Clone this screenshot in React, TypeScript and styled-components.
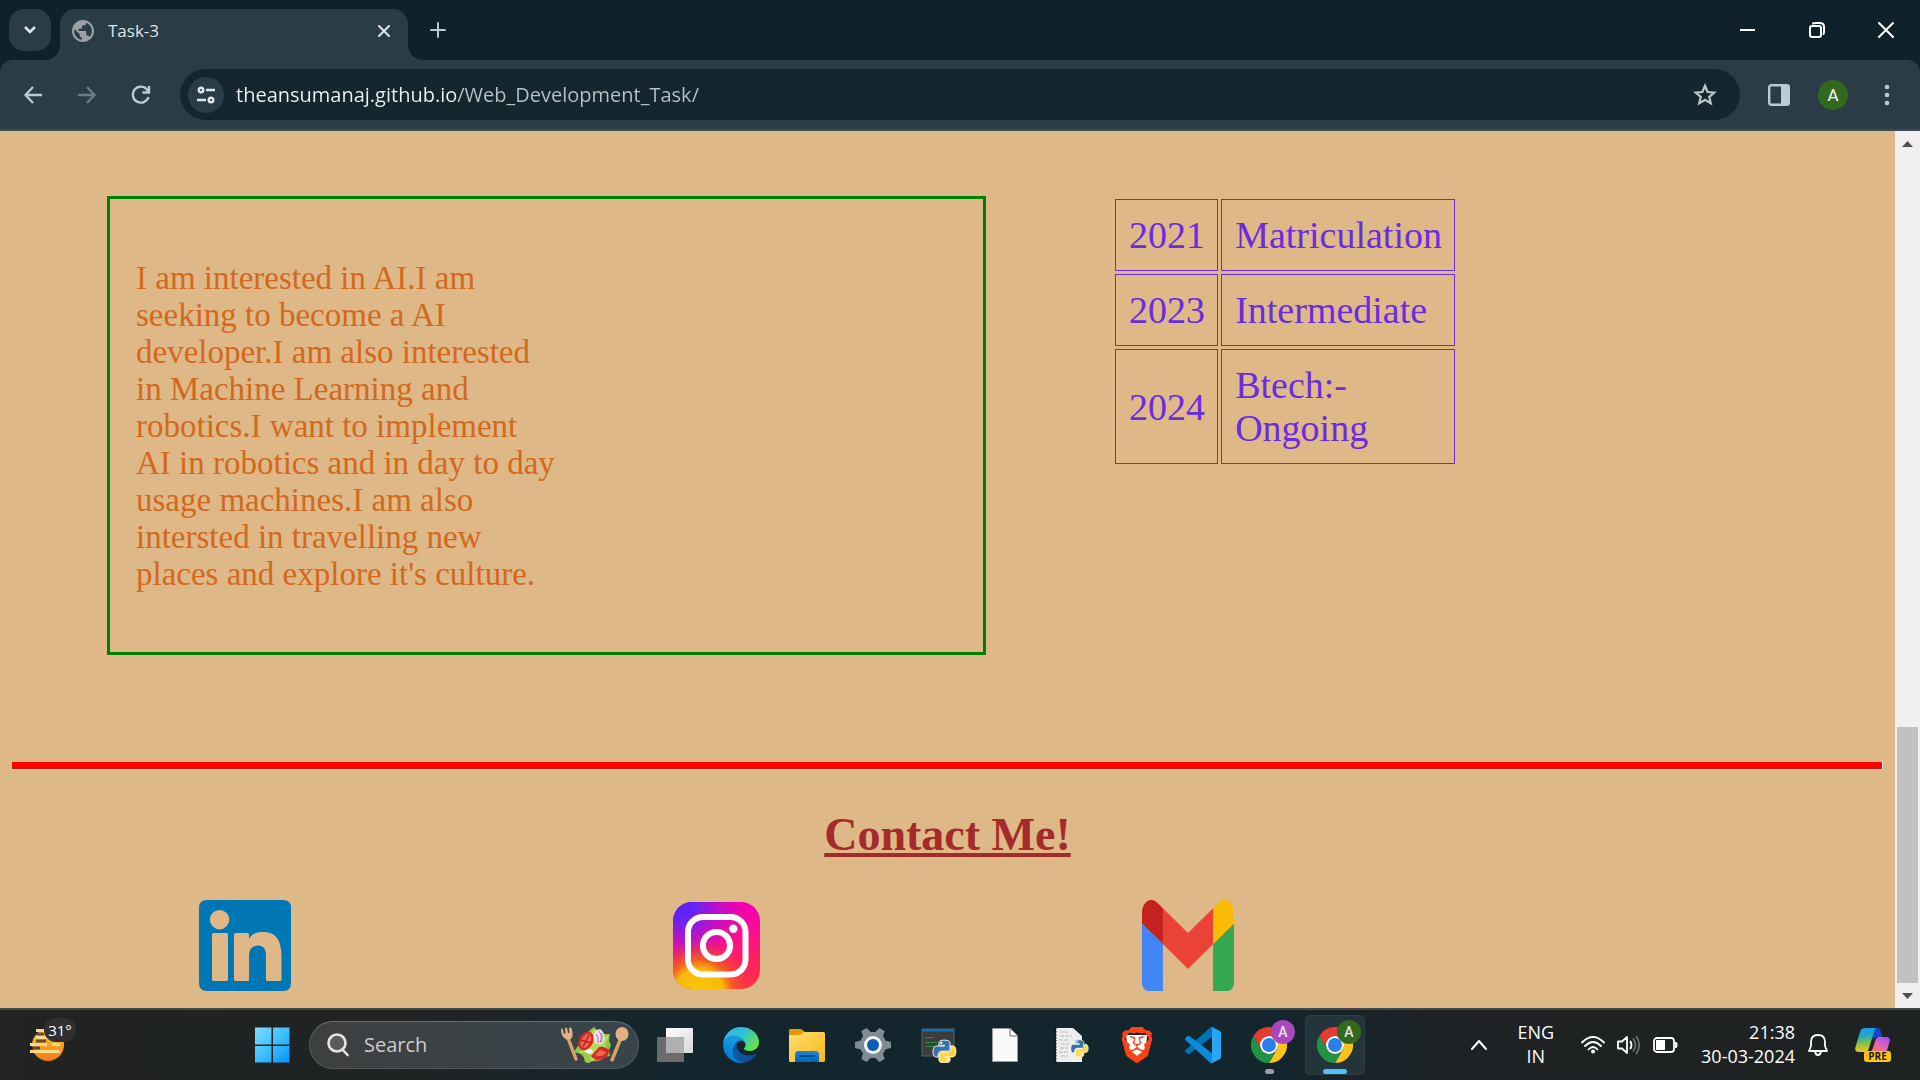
import React from "react";
import styled, { createGlobalStyle, css } from "styled-components";
import { SiBrave } from "react-icons/si";

const ui = '"Open Sans", "Noto Sans", sans-serif';
const serif = '"Liberation Serif", "Times New Roman", serif';

const GlobalStyle = createGlobalStyle`
  * { box-sizing: border-box; }
  body { margin: 0; background: #0f222b; }
`;

const Screen = styled.div`
  display: grid;
  grid-template-rows: auto minmax(0, 1fr) auto;
  height: 100vh;
  font-family: ${ui};
  overflow: hidden;
`;

/* ---------- browser chrome ---------- */

const BareButton = styled.button`
  display: flex;
  align-items: center;
  justify-content: center;
  flex: none;
  padding: 0;
  border: 0;
  background: none;
  color: inherit;
  font: inherit;
  cursor: pointer;
  svg { display: block; }
`;

const TabStrip = styled.header`
  display: flex;
  align-items: stretch;
  height: 60px;
  padding-left: 9px;
  background: #0f222b;
  color: #dfe5e8;
`;

const TabSearch = styled(BareButton)`
  width: 42px;
  height: 42px;
  margin: 9px 9px 0 0;
  border-radius: 15px;
  background: #2a3d47;
`;

const Tab = styled.div`
  position: relative;
  display: flex;
  align-items: center;
  width: 348px;
  margin-top: 9px;
  padding: 0 12px 8px;
  border-radius: 15px 15px 0 0;
  background: #2a3d47;
  &::before, &::after {
    content: "";
    position: absolute;
    bottom: 0;
    width: 15px;
    height: 15px;
  }
  &::before { right: 100%; background: radial-gradient(circle at 0 0, transparent 15px, #2a3d47 15px); }
  &::after { left: 100%; background: radial-gradient(circle at 100% 0, transparent 15px, #2a3d47 15px); }
`;

const TabTitle = styled.span`
  flex: 1;
  padding-left: 14px;
  font-size: 17px;
  line-height: 24px;
`;

const TabClose = styled(BareButton)` width: 24px; height: 24px; `;

const NewTab = styled(BareButton)`
  width: 42px;
  height: 42px;
  margin: 9px 0 0 9px;
  color: #b7cbd8;
`;

const WindowControls = styled.div`
  display: flex;
  margin-left: auto;
  color: #fff;
`;

const WindowButton = styled(BareButton)` width: 69px; `;

const Toolbar = styled.nav`
  display: flex;
  align-items: center;
  height: 71px;
  border-bottom: 2px solid #404a52;
  border-radius: 12px 12px 0 0;
  padding: 0 6px;
  background: #2a3d47;
  color: #b7cbd8;
`;

const ToolButton = styled(BareButton)<{ $dim?: boolean }>`
  width: 54px;
  height: 42px;
  opacity: ${(p) => (p.$dim ? 0.45 : 1)};
`;

const AddressBar = styled.form`
  display: flex;
  align-items: center;
  flex: 1;
  height: 51px;
  margin: 0 12px;
  padding: 0 15px 0 8px;
  border-radius: 26px;
  background: #14272f;
`;

const SiteInfo = styled(BareButton)`
  width: 36px;
  height: 36px;
  border-radius: 50%;
  background: #2a3d47;
  color: #dfe5e8;
`;

const AddressInput = styled.input`
  flex: 1;
  min-width: 0;
  padding: 0 12px;
  border: 0;
  outline: 0;
  color: #e3e8ea;
  font: 20px/30px ${ui};
  background: linear-gradient(90deg, #f4f7f8 232px, #b9c2c6 232px);
  -webkit-background-clip: text;
  background-clip: text;
  -webkit-text-fill-color: transparent;
`;

const Star = styled(BareButton)` width: 40px; height: 40px; color: #c3c8ce; `;

const Avatar = styled.span`
  display: flex;
  align-items: center;
  justify-content: center;
  width: 30px;
  height: 30px;
  border-radius: 50%;
  background: #33691e;
  color: #fff;
  font-family: Roboto, sans-serif;
  font-size: 17px;
`;

/* ---------- web page ---------- */

const Viewport = styled.div`
  display: flex;
  min-height: 0;
  background: burlywood;
`;

const Page = styled.main`
  flex: 1;
  min-width: 0;
  overflow: hidden;
  padding-top: 65px;
  font-family: ${serif};
`;

const About = styled.section`
  display: grid;
  grid-template-columns: 879fr 783fr;
  gap: 126px;
  padding-left: 107px;
`;

const Interests = styled.div`
  padding: 61px 26px 59px;
  border: 3px solid green;
  color: chocolate;
  font-size: 33px;
  line-height: 37px;
  p { max-width: 420px; margin: 0; }
`;

const Education = styled.table`
  width: 346px;
  align-self: start;
  border-collapse: separate;
  border-spacing: 3px;
  color: #6a2be2;
  font-size: 38px;
  line-height: 43px;
  th, td {
    padding: 14px 12px 13px 13px;
    border: 1px solid #6a2be2;
    font-weight: normal;
    text-align: left;
  }
  th { width: 104px; }
`;

const Divider = styled.hr`
  height: 8px;
  margin: 107px 12px 0;
  border: 0;
  border-right: 1px solid #eee;
  border-bottom: 1px solid #eee;
  background: red;
`;

const ContactTitle = styled.h2`
  margin: 38px 0;
  color: brown;
  font-size: 46px;
  line-height: 54px;
  text-align: center;
  text-decoration: underline;
`;

const Contacts = styled.section`
  display: grid;
  grid-template-columns: repeat(4, 1fr);
  padding-left: 9px;
`;

const ContactLink = styled.a`
  display: flex;
  align-items: center;
  justify-content: center;
  height: 91px;
`;

const ScrollBar = styled.aside`
  display: flex;
  flex-direction: column;
  width: 25px;
  background: #f0f0f0;
  color: #505050;
`;

const ScrollButton = styled(BareButton)` height: 25px; `;

const ScrollTrack = styled.div`
  display: flex;
  flex: 1;
  flex-direction: column;
  justify-content: flex-end;
  padding: 0 2px;
`;

const ScrollThumb = styled.div` height: 31%; background: #c1c1c1; `;

/* ---------- task bar ---------- */

const Taskbar = styled.footer`
  display: grid;
  grid-template-columns: 243px auto minmax(0, 1fr);
  height: 72px;
  border-top: 2px solid #43494a;
  background: linear-gradient(90deg, #222323 0%, #1f2324 22%, #13262e 36%, #13262e 66%, #1e2224 76%, #1f2223 100%);
  color: #fff;
`;

const Weather = styled(BareButton)`
  justify-content: flex-start;
  padding-left: 28px;
`;

const Temperature = styled.span`
  align-self: flex-start;
  width: 32px;
  margin: 8px 0 0 -20px;
  border-radius: 12px;
  background: #303030;
  font-size: 15px;
  line-height: 24px;
`;

const Apps = styled.div`
  display: flex;
  align-items: center;
  gap: 6px;
`;

const AppButton = styled(BareButton)<{ $active?: boolean; $mark?: boolean }>`
  position: relative;
  width: 60px;
  height: 60px;
  border-radius: 6px;
  ${(p) => p.$active && css`
    background: #24343b;
    box-shadow: inset 0 0 0 1px #303e44;
  `}
  ${(p) => (p.$active || p.$mark) && css`
    &::after {
      content: "";
      position: absolute;
      bottom: 1px;
      width: ${p.$active ? 24 : 9}px;
      height: 5px;
      border-radius: 3px;
      background: ${p.$active ? "#4cc2ff" : "#9aa0a3"};
    }
  `}
`;

const ProfileBadge = styled.span<{ $color: string }>`
  position: absolute;
  top: 5px;
  right: 4px;
  width: 24px;
  height: 24px;
  border-radius: 50%;
  background: ${(p) => p.$color};
  color: #e6e6e6;
  font: 500 14px/24px Roboto, sans-serif;
  text-align: center;
`;

const SearchBox = styled.label`
  display: flex;
  align-items: center;
  width: 330px;
  height: 48px;
  padding: 0 8px 0 17px;
  border: 1px solid #55595b;
  border-top-color: #6a6e70;
  border-radius: 24px;
  background: linear-gradient(90deg, #3e3f40, #37454b);
`;

const SearchInput = styled.input`
  flex: 1;
  min-width: 0;
  padding: 0 0 0 15px;
  border: 0;
  outline: 0;
  background: none;
  color: #fff;
  font: 20px/28px ${ui};
  &::placeholder { color: #cdcdcd; opacity: 1; }
`;

const Tray = styled.div`
  display: flex;
  align-items: center;
  justify-content: flex-end;
  padding-right: 29px;
  font-size: 18px;
  line-height: 24px;
`;

const TrayButton = styled(BareButton)<{ $gap: number }>`
  margin-left: ${(p) => p.$gap}px;
`;

const TwoLines = styled(TrayButton)<{ $align: string }>`
  flex-direction: column;
  align-items: ${(p) => p.$align};
  padding-bottom: 2px;
`;

/* ---------- drawings ---------- */

const stroke = { fill: "none", stroke: "currentColor", strokeLinecap: "round", strokeLinejoin: "round" } as const;

const Globe = () => (
  <svg width="22" height="22" viewBox="2 2 20 20" fill="#9aa0a6">
    <path d="M12 2C6.480 2 2 6.480 2 12s4.480 10 10 10 10-4.480 10-10S17.520 2 12 2zm-1 17.930c-3.950-.49-7-3.850-7-7.930 0-.62.080-1.210.210-1.790L9 15v1c0 1.100.9 2 2 2v1.930zm6.900-2.540c-.26-.81-1-1.390-1.900-1.390h-1v-3c0-.55-.45-1-1-1H8v-2h2c.55 0 1-.45 1-1V7h2c1.100 0 2-.9 2-2v-.41c2.930 1.190 5 4.060 5 7.410 0 2.080-.8 3.970-2.100 5.390z" />
  </svg>
);

const LinkedIn = () => (
  <svg width="92" height="91" viewBox="0 0 92 91">
    <path fill="#0077b5" fillRule="evenodd" d="M8 0H84Q92 0 92 8V83Q92 91 84 91H8Q0 91 0 83V8Q0 0 8 0ZM20.600 10a9.700 9.700 0 1 0 0 19.400a9.700 9.700 0 0 0 0-19.400ZM14.500 33Q13 33 13 34.500V79.500Q13 81 14.500 81H27.500Q29 81 29 79.500V34.500Q29 33 27.500 33ZM36.500 33Q35 33 35 34.500V79.500Q35 81 36.500 81H48.500Q50 81 50 79.500V56C50 49 53.500 45.500 59 45.500S67 49 67 56V79.500Q67 81 68.500 81H81Q82.500 81 82.500 79.500V57C82.500 40 77 32 64 32C57 32 52.500 34 50 39V34.500Q50 33 48.500 33Z" />
  </svg>
);

const Instagram = () => (
  <svg width="87" height="87" viewBox="0 0 87 87">
    <defs>
      <linearGradient id="igBase" x1="0.700" y1="0" x2="0.800" y2="1">
        <stop offset="0" stopColor="#f000b4" /><stop offset=".3" stopColor="#fb0a9a" /><stop offset=".65" stopColor="#ff1f64" /><stop offset="1" stopColor="#ff3245" />
      </linearGradient>
      <radialGradient id="igBlue" cx="0.080" cy="0.030" r=".75">
        <stop offset="0" stopColor="#5126ff" /><stop offset=".25" stopColor="#6a22f5" /><stop offset="1" stopColor="#c80acb" stopOpacity="0" />
      </radialGradient>
      <radialGradient id="igGold" cx=".3" cy="1.050" r=".62">
        <stop offset="0" stopColor="#f9c802" /><stop offset=".45" stopColor="#f8b90d" /><stop offset=".62" stopColor="#f4601f" /><stop offset="1" stopColor="#ee303f" stopOpacity="0" />
      </radialGradient>
    </defs>
    {["igBase", "igBlue", "igGold"].map((id) => <rect key={id} width="87" height="87" rx="19" fill={`url(#${id})`} />)}
    <g fill="none" stroke="#fff" strokeWidth="6">
      <rect x="15" y="15" width="57.500" height="57.500" rx="15" />
      <circle cx="43.500" cy="43.500" r="13.600" />
    </g>
    <circle cx="60.300" cy="26.800" r="4.200" fill="#fff" />
  </svg>
);

const Gmail = () => (
  <svg width="92" height="91" viewBox="52 42 88 66" preserveAspectRatio="none">
    <path fill="#4285f4" d="M58 108h14V74L52 59v43c0 3.320 2.690 6 6 6" />
    <path fill="#34a853" d="M120 108h14c3.320 0 6-2.690 6-6V59l-20 15" />
    <path fill="#fbbc04" d="M120 48v26l20-15v-8c0-7.420-8.470-11.650-14.400-7.200" />
    <path fill="#ea4335" d="M72 74V48l24 18 24-18v26L96 92" />
    <path fill="#c5221f" d="M52 51v8l20 15V48l-5.600-4.200c-5.940-4.450-14.400-.220-14.400 7.200" />
  </svg>
);

const Sun = () => (
  <svg width="36" height="36" viewBox="0 0 36 36">
    <defs><linearGradient id="sun" x1="0" y1="0" x2="0" y2="1"><stop offset="0" stopColor="#ffc83d" /><stop offset="1" stopColor="#f07a14" /></linearGradient></defs>
    <circle cx="20" cy="18" r="16" fill="url(#sun)" />
    <g stroke="#fbd98a" strokeWidth="3"><path d="M8 3.500h9M8 10.500h12M2 17.500h17M24 17.500h8M2 24.500h30" /></g>
    <path d="M8 7h8M8 14h10M4 21h8" stroke="#2a2622" strokeWidth="3" opacity=".7" />
  </svg>
);

const WindowsLogo = () => (
  <svg width="36" height="36" viewBox="0 0 36 36">
    <defs><linearGradient id="win" gradientUnits="userSpaceOnUse" x1="0" y1="0" x2="36" y2="36"><stop offset="0" stopColor="#7fdcff" /><stop offset=".5" stopColor="#3cc0fd" /><stop offset="1" stopColor="#0a8bfd" /></linearGradient></defs>
    <path fill="url(#win)" d="M0 .5h16.500v17H0zM18 .5H34.500v17H18zM0 19h16.500v16.500H0zM18 19H34.500v16.500H18z" />
  </svg>
);

const Salad = () => (
  <svg width="70" height="38" viewBox="0 0 70 38">
    <g stroke="#d99f68" strokeLinecap="round">
      <path d="M8 12 16 33" strokeWidth="3.500" /><path d="M61 12 52 34" strokeWidth="3.500" />
    </g>
    <path fill="#e5b184" d="M1 4c0-2 2-2 2 0l1 4 1.500-.5L5 3c0-2 2-2 2.300 0L8 7l1.500-.3L9 3c0-2 2.300-2 2.700 0 1 4 2 9-2 10.500C4.500 15 1 9 1 4Z" />
    <ellipse cx="62" cy="8" rx="6.500" ry="7" fill="#e5b184" />
    <circle cx="34" cy="20" r="15.500" fill="#c47a45" />
    <path fill="#8cc63e" d="M30 4 34 1l3 3 4-1 1 5 8 0-1 7 2 4-2 5 1 6-6 1-3-3-5 2-3 5-6 2-2-6-4-3-7-2 3-5 5-4 0-6 5-3Z" />
    <path fill="#b4dc5c" d="M32 5 36 3 36 14 42 12 49 9 45 19 48 27 38 27 34 35 27 34 27 27 17 27 26 22Z" />
    <ellipse cx="26" cy="15" rx="7" ry="10" transform="rotate(28 26 15)" fill="#d52b24" />
    <ellipse cx="26" cy="15" rx="4.500" ry="7.500" transform="rotate(28 26 15)" fill="#ee6850" />
    <path d="M23 21 29 9M20 14l12 3" stroke="#c4231f" strokeWidth="1.500" />
    <path fill="#d52b24" d="M31 30a10 9 0 0 0 18-6q-6-5-10-3Z" /><path fill="#ef6a52" d="M35 29q8 3 11-3l-6-2Z" />
    <ellipse cx="39" cy="11" rx="5.500" ry="7.500" fill="#efe3f0" />
    <path d="M36 8q3 3 2 9M39 5q4 5 1 12M42 7q1 4-1 9" fill="none" stroke="#ab6aa6" strokeWidth="1" />
    <path fill="#f4eef0" d="M24 25q7-5 9 1l-3 3Z" /><path fill="#9acd45" d="M23 28 31 28 30 37 25 36Z" />
  </svg>
);

const TaskView = () => (
  <svg width="36" height="36" viewBox="0 0 36 36">
    <defs><linearGradient id="tv" x2="1" y2="1"><stop stopColor="#fff" /><stop offset="1" stopColor="#d8d8d8" /></linearGradient></defs>
    <rect x="9" y="1" width="27" height="25" rx="1" fill="url(#tv)" />
    <rect x="0" y="10" width="27" height="25" rx="1" fill="#6b6b6b" />
    <path d="M9 10H27V26H9Z" fill="#b0b0b0" />
  </svg>
);

const Edge = () => (
  <svg width="36" height="36" viewBox="0 0 256 256">
    <defs>
      <linearGradient id="ed1" x1=".2" y1=".5" x2="1" y2=".5"><stop stopColor="#0c59a4" /><stop offset="1" stopColor="#114a8b" /></linearGradient>
      <linearGradient id="ed2" x1=".9" y1=".2" x2=".3" y2="1"><stop stopColor="#1b9de2" /><stop offset=".4" stopColor="#1595df" /><stop offset="1" stopColor="#0078d4" /></linearGradient>
      <linearGradient id="ed3" x1="0" y1=".2" x2="1" y2=".7"><stop stopColor="#35b5f1" /><stop offset=".45" stopColor="#2bc3d2" /><stop offset="1" stopColor="#6be23c" /></linearGradient>
    </defs>
    <path fill="url(#ed1)" d="M231 190.500c-3.400 1.800-6.900 3.400-10.500 4.700a101.500 101.500 0 0 1-35.900 6.500c-47.300 0-88.500-32.500-88.500-74.300 0-11.900 6.700-22.300 16.500-28.200-42.800 1.800-53.800 46.400-53.800 72.500 0 73.900 68.100 81.400 82.800 81.400 7.900 0 19.800-2.300 27-4.600l1.300-.4a128.300 128.300 0 0 0 66.600-52.800 4 4 0 0 0-5.500-4.800Z" />
    <path fill="url(#ed2)" d="M105.700 241.400a79.200 79.200 0 0 1-22.700-21.300 80.700 80.700 0 0 1 29.500-120.900c3.200-1.500 8.500-4.100 15.600-4 10.100.1 19.700 4.800 25.700 12.900a32.100 32.100 0 0 1 6.300 18.700c0-.2 24.500-79.600-80-79.600-43.900 0-80 41.600-80 78.200a130.200 130.200 0 0 0 12.100 56 128 128 0 0 0 156.400 67 75.600 75.600 0 0 1-62.800-7Z" />
    <path fill="url(#ed3)" d="M152.300 148.900c-.8 1-3.300 2.500-3.300 5.700 0 2.600 1.700 5.100 4.700 7.200 14.400 10 41.500 8.700 41.600 8.700a59.600 59.600 0 0 0 30.300-8.300 61.400 61.400 0 0 0 30.400-52.900c.3-22.400-8-37.300-11.300-43.900C223.500 23.900 177.700 0 128 0A128 128 0 0 0 0 126.200c.5-36.500 36.800-66 80-66 3.500 0 23.500.3 42 10.100 16.300 8.600 24.900 18.900 30.800 29.200 6.200 10.700 7.300 24.100 7.300 29.500 0 5.300-2.700 13.300-7.800 19.900Z" />
  </svg>
);

const Folder = () => (
  <svg width="36" height="36" viewBox="0 0 36 36">
    <defs>
      <linearGradient id="fo" x2="1" y2="1"><stop stopColor="#ffdd74" /><stop offset="1" stopColor="#fcb716" /></linearGradient>
      <linearGradient id="fob" x2="0" y2="1"><stop stopColor="#1d86da" /><stop offset="1" stopColor="#0466b8" /></linearGradient>
    </defs>
    <path fill="#dd9d00" d="M0 3.500Q0 2 1.500 2H11q1.500 0 2.500 1L17 6V12H0Z" />
    <path fill="url(#fo)" d="M0 8H11l4-3H34.500Q36 5 36 6.500V33.500Q36 35 34.500 35H1.500Q0 35 0 33.500Z" />
    <path fill="url(#fob)" d="M6 35V27.500Q6 24 9.500 24H26.500Q30 24 30 27.500V35Z" />
    <path d="M11 29H25" stroke="#044e8d" strokeWidth="2" strokeLinecap="round" />
  </svg>
);

const Gear = () => (
  <svg width="36" height="36" viewBox="0 0 36 36">
    <g fill="#818b94">
      {[0, 60, 120, 180, 240, 300].map((a) => (
        <path key={a} transform={`rotate(${a} 18 18)`} d="M28 10 30 13.500 36 15V21L30 22.500 28 26Z" />
      ))}
      <circle cx="18" cy="18" r="13" />
    </g>
    <circle cx="18" cy="18" r="9" fill="#f4f6f7" />
    <circle cx="18" cy="18" r="6" fill="#0f5cb4" />
  </svg>
);

const Snakes = ({ x, y, size }: { x: number; y: number; size: number }) => {
  const snake = "M63.400 1.100C31.700 1.100 33.700 14.800 33.700 14.800V29h30.200v4.300H21.700S1.500 31 1.500 62.900s17.700 30.700 17.700 30.700h10.500V78.800s-.6-17.700 17.400-17.700h30s16.800.3 16.800-16.300V17.400S96.500 1.100 63.400 1.100Z";
  return (
    <svg x={x} y={y} width={size} height={size} viewBox="-4 -4 136 134">
      <g stroke="#fff" strokeWidth="5">
        <path d={snake} fill="#3873a8" />
        <path d={snake} fill="#ffd747" transform="rotate(180 63.900 63)" />
      </g>
      <circle cx="47" cy="16" r="6" fill="#fff" /><circle cx="81" cy="110" r="6" fill="#fff" />
    </svg>
  );
};

const PythonConsole = () => (
  <svg width="36" height="36" viewBox="0 0 36 36">
    <rect x="1" y="2" width="32" height="27" fill="#3c3c3c" stroke="#5d6264" />
    <path d="M1 2H33V4.500H1Z" fill="#0a71c0" />
    <path d="M4.500 10.500h8M4.500 15.500h12M4.500 19.500h10" stroke="#2f8d34" strokeWidth="1.200" />
    <Snakes x={11} y={12} size={25} />
  </svg>
);

const BlankFile = () => (
  <svg width="36" height="36" viewBox="0 0 36 36">
    <path d="M5.500 1.500H23L30.500 9V34.500H5.500Z" fill="#fafafa" stroke="#9b9b9b" />
    <path d="M23 1.500V9H30.500" fill="#fff" stroke="#6f6f6f" />
  </svg>
);

const PythonScript = () => (
  <svg width="36" height="36" viewBox="0 0 36 36">
    <path d="M3 1H20L29 9V35H3Z" fill="#eee" />
    <path d="M2.500 1V35" stroke="#111" strokeWidth="2" strokeDasharray="1.500 1.500" />
    <path d="M7 5h8M7 9h12M6 13h9M8 17h8M7 21h8M6 25h9M8 29h7" stroke="#b5b5b5" strokeWidth="1.200" strokeDasharray="4 1" />
    <Snakes x={17} y={12} size={19} />
  </svg>
);

const Brave = () => (
  <svg width="36" height="36" viewBox="0 0 36 36">
    <path d="M7 8 28 8 27 24 18 31 9 24Z" fill="#fff" />
    <SiBrave size={36} color="#fb4318" />
  </svg>
);

const VsCode = () => (
  <svg width="36" height="36" viewBox="0 0 100 100">
    <path fill="#0071b8" d="M96.500 10.800 75.900.9a6.200 6.200 0 0 0-7.100 1.200L1.300 63.600a4.200 4.200 0 0 0 0 6.100l5.500 5a4.200 4.200 0 0 0 5.300.2L93.400 13.400A4.100 4.100 0 0 1 100 16.700v-.2a6.300 6.300 0 0 0-3.500-5.700Z" />
    <path fill="#0c8ad8" d="M96.500 89.200 75.900 99.100a6.200 6.200 0 0 1-7.100-1.200L1.300 36.400a4.200 4.200 0 0 1 0-6.100l5.500-5a4.200 4.200 0 0 1 5.300-.2l81.300 61.500a4.100 4.100 0 0 0 6.600-3.300v.2a6.300 6.300 0 0 1-3.500 5.700Z" />
    <path fill="#28a8f4" d="M75.900 99.100a6.200 6.200 0 0 1-7.100-1.200c2.300 2.300 6.200.7 6.200-2.600V4.700c0-3.300-3.900-4.900-6.200-2.600a6.200 6.200 0 0 1 7.100-1.200l20.600 9.900A6.300 6.300 0 0 1 100 16.400v67.200a6.300 6.300 0 0 1-3.500 5.600Z" />
  </svg>
);

const Chrome = () => (
  <svg width="36" height="36" viewBox="0 0 48 48">
    <path fill="#e33b2e" d="M3.200 12A24 24 0 0 1 44.800 12H24A12 12 0 0 0 13.600 30Z" />
    <path fill="#fcc31e" d="M44.800 12A24 24 0 0 1 24 48L34.400 30A12 12 0 0 0 24 12Z" />
    <path fill="#229342" d="M24 48A24 24 0 0 1 3.200 12L13.600 30A12 12 0 0 0 34.400 30Z" />
    <circle cx="24" cy="24" r="12" fill="#fff" /><circle cx="24" cy="24" r="9.300" fill="#2b7de9" />
  </svg>
);

const CopilotMark = styled.span`
  position: relative;
  display: block;
  width: 36px;
  height: 36px;
`;

const Pre = styled.span`
  position: absolute;
  right: 0;
  bottom: 1px;
  width: 27px;
  border-radius: 3px;
  background: #ffc50d;
  color: #1b1b1b;
  font: 700 10px/11px ${ui};
  text-align: center;
`;

const Copilot = () => (
  <CopilotMark>
    <svg width="36" height="36" viewBox="0 0 36 36">
      <defs>
        <linearGradient id="cp1" x2=".1" y2="1"><stop stopColor="#2397f5" /><stop offset=".35" stopColor="#1da8c8" /><stop offset=".65" stopColor="#7cc04a" /><stop offset="1" stopColor="#f5c51b" /></linearGradient>
        <linearGradient id="cp2" x1="1" y1="0" x2=".3" y2="1"><stop stopColor="#8c50f5" /><stop offset=".45" stopColor="#d65bd0" /><stop offset="1" stopColor="#fb7a62" /></linearGradient>
      </defs>
      <path fill="#1546c8" d="M16 1h6q3 0 4 4l1.500 5H22q-3 0-4 4Z" />
      <path fill="url(#cp1)" d="M10 1H22q-2 0-3 4L14 21q-1 4-5 4H4q-5 0-3.500-5L5 5q1-4 5-4Z" />
      <path fill="url(#cp2)" d="M24 10h7q5 0 3.500 5l-3 10H15q2-1 3-4l2.500-8q1-3 3.500-3Z" />
    </svg>
    <Pre>PRE</Pre>
  </CopilotMark>
);

const schooling = [
  ["2021", "Matriculation"],
  ["2023", "Intermediate"],
  ["2024", "Btech:-Ongoing"],
];

const pinned = [
  ["Task view", TaskView],
  ["Microsoft Edge", Edge],
  ["File Explorer", Folder],
  ["Settings", Gear],
  ["Python", PythonConsole],
  ["Document", BlankFile],
  ["IDLE", PythonScript],
  ["Brave", Brave],
  ["Visual Studio Code", VsCode],
] as const;

export default function App() {
  return (
    <Screen>
      <GlobalStyle />
      <div>
        <TabStrip>
          <TabSearch aria-label="Search tabs">
            <svg width="14" height="10" viewBox="0 0 14 10" {...stroke} strokeWidth="2.500" strokeLinecap="butt" strokeLinejoin="miter"><path d="M2 2 7 7 12 2" /></svg>
          </TabSearch>
          <Tab>
            <Globe />
            <TabTitle>Task-3</TabTitle>
            <TabClose aria-label="Close tab">
              <svg width="14" height="14" viewBox="0 0 14 14" {...stroke} strokeWidth="2"><path d="M2 2 12 12M12 2 2 12" /></svg>
            </TabClose>
          </Tab>
          <NewTab aria-label="New tab">
            <svg width="16" height="16" viewBox="0 0 16 16" {...stroke} strokeWidth="2"><path d="M8 1V15M1 8H15" /></svg>
          </NewTab>
          <WindowControls>
            <WindowButton aria-label="Minimize"><svg width="16" height="16" viewBox="0 0 16 16" fill="#fff"><path d="M0 7H15V9H0Z" /></svg></WindowButton>
            <WindowButton aria-label="Restore">
              <svg width="16" height="16" viewBox="0 0 16 16" {...stroke} strokeWidth="2"><rect x="1" y="4" width="11" height="11" rx="2" /><path d="M4 1.500Q5 1 7 1H11Q15 1 15 5V9Q15 11 14.500 12" /></svg>
            </WindowButton>
            <WindowButton aria-label="Close window">
              <svg width="16" height="16" viewBox="0 0 16 16" {...stroke} strokeWidth="2"><path d="M1 1 15 15M15 1 1 15" /></svg>
            </WindowButton>
          </WindowControls>
        </TabStrip>
        <Toolbar>
          <ToolButton aria-label="Back"><svg width="20" height="20" viewBox="0 0 20 20" {...stroke} strokeWidth="2.300" strokeLinecap="butt" strokeLinejoin="miter"><path d="M19 10H3M10 2 2.500 10 10 18" /></svg></ToolButton>
          <ToolButton aria-label="Forward" $dim><svg width="20" height="20" viewBox="0 0 20 20" {...stroke} strokeWidth="2.300" strokeLinecap="butt" strokeLinejoin="miter"><path d="M1 10H17M10 2 17.500 10 10 18" /></svg></ToolButton>
          <ToolButton aria-label="Reload"><svg width="20" height="20" viewBox="0 0 20 20" {...stroke} strokeWidth="2.400" strokeLinecap="butt" strokeLinejoin="miter"><path d="M17.500 12A8 8 0 1 1 16 4.500L18 7" /><path d="M18 1V7.500H11.500" /></svg></ToolButton>
          <AddressBar onSubmit={(e) => e.preventDefault()}>
            <SiteInfo type="button" aria-label="Site information">
              <svg width="20" height="18" viewBox="0 0 20 18" {...stroke} strokeWidth="2.400" strokeLinecap="butt"><circle cx="5" cy="4" r="2.300" /><path d="M10 4H19M1 14H10" /><circle cx="15" cy="14" r="2.300" /></svg>
            </SiteInfo>
            <AddressInput aria-label="Address" defaultValue="theansumanaj.github.io/Web_Development_Task/" />
            <Star type="button" aria-label="Bookmark">
              <svg width="26" height="26" viewBox="0 0 24 24" {...stroke} strokeWidth="2" strokeLinejoin="miter"><path d="m12 3.500 2.400 5.700 6.100.5-4.600 4 1.400 6L12 16.500 6.700 19.700l1.400-6-4.600-4 6.100-.5Z" /></svg>
            </Star>
          </AddressBar>
          <ToolButton aria-label="Side panel">
            <svg width="22" height="22" viewBox="0 0 22 22"><rect x="1.200" y="1.200" width="19.600" height="19.600" rx="2" {...stroke} strokeWidth="2.400" /><path d="M13 1H21V21H13Z" fill="currentColor" /></svg>
          </ToolButton>
          <ToolButton aria-label="Profile"><Avatar>A</Avatar></ToolButton>
          <ToolButton aria-label="Menu">
            <svg width="6" height="22" viewBox="0 0 6 22" fill="currentColor"><circle cx="3" cy="3" r="2.300" /><circle cx="3" cy="11" r="2.300" /><circle cx="3" cy="19" r="2.300" /></svg>
          </ToolButton>
        </Toolbar>
      </div>

      <Viewport>
        <Page>
          <About>
            <Interests>
              <p>I am interested in AI.I am seeking to become a AI developer.I am also interested in Machine Learning and robotics.I want to implement AI in robotics and in day to day usage machines.I am also intersted in travelling new places and explore it's culture.</p>
            </Interests>
            <Education>
              <tbody>
                {schooling.map(([year, stage]) => (
                  <tr key={year}><th scope="row">{year}</th><td>{stage}</td></tr>
                ))}
              </tbody>
            </Education>
          </About>
          <Divider />
          <ContactTitle>Contact Me!</ContactTitle>
          <Contacts>
            <ContactLink href="#linkedin" aria-label="LinkedIn"><LinkedIn /></ContactLink>
            <ContactLink href="#instagram" aria-label="Instagram"><Instagram /></ContactLink>
            <ContactLink href="#gmail" aria-label="Gmail"><Gmail /></ContactLink>
          </Contacts>
        </Page>
        <ScrollBar>
          <ScrollButton aria-label="Scroll up"><svg width="11" height="6" viewBox="0 0 11 6" fill="currentColor"><path d="M0 6 5.500 0 11 6Z" /></svg></ScrollButton>
          <ScrollTrack><ScrollThumb /></ScrollTrack>
          <ScrollButton aria-label="Scroll down"><svg width="11" height="6" viewBox="0 0 11 6" fill="currentColor"><path d="M0 0H11L5.500 6Z" /></svg></ScrollButton>
        </ScrollBar>
      </Viewport>

      <Taskbar>
        <Weather aria-label="Weather"><Sun /><Temperature>31°</Temperature></Weather>
        <Apps>
          <AppButton aria-label="Start"><WindowsLogo /></AppButton>
          <SearchBox>
            <svg width="22" height="24" viewBox="0 0 22 24" {...stroke} stroke="#e4e4e4" strokeWidth="2.600"><circle cx="10" cy="10" r="8.500" fill="#5a5b5c" /><path d="M15.500 16.500 20.500 22" /></svg>
            <SearchInput placeholder="Search" aria-label="Search" />
            <Salad />
          </SearchBox>
          {pinned.map(([name, Icon]) => <AppButton key={name} aria-label={name}><Icon /></AppButton>)}
          <AppButton aria-label="Chrome, first profile" $mark><Chrome /><ProfileBadge $color="#ab47bc">A</ProfileBadge></AppButton>
          <AppButton aria-label="Chrome, second profile" $active><Chrome /><ProfileBadge $color="#33691e">A</ProfileBadge></AppButton>
        </Apps>
        <Tray>
          <TrayButton $gap={0} aria-label="Hidden icons"><svg width="18" height="12" viewBox="0 0 18 12" {...stroke} strokeWidth="2"><path d="M2 10 9 2 16 10" /></svg></TrayButton>
          <TwoLines $gap={29} $align="center"><span>ENG</span><span>IN</span></TwoLines>
          <TrayButton $gap={26} aria-label="Network">
            <svg width="26" height="20" viewBox="0 0 26 20" {...stroke} strokeWidth="1.800"><path d="M2 7.500Q13-3.500 24 7.500M5 11Q13 3 21 11M8.500 14.500Q13 9.500 17.500 14.500" /><circle cx="13" cy="16.500" r="2" fill="currentColor" stroke="none" /></svg>
          </TrayButton>
          <TrayButton $gap={10} aria-label="Volume">
            <svg width="26" height="22" viewBox="0 0 26 22" {...stroke} strokeWidth="1.800"><path d="M2 7.500H6L11 3V19L6 14.500H2Z" /><path d="M14.500 7.500Q16.500 11 14.500 14.500" /><path d="M17.500 5Q21.500 11 17.500 17M20.500 2.500Q26 11 20.500 19.500" opacity=".35" /></svg>
          </TrayButton>
          <TrayButton $gap={10} aria-label="Battery">
            <svg width="26" height="18" viewBox="0 0 26 18" {...stroke} strokeWidth="1.800"><rect x="2" y="2" width="20" height="14" rx="3" /><path d="M4 4H13V14H4ZM23 6H24Q25.500 6 25.500 9T24 12H23Z" fill="currentColor" stroke="none" /></svg>
          </TrayButton>
          <TwoLines $gap={23} $align="flex-end"><span>21:38</span><span>30-03-2024</span></TwoLines>
          <TrayButton $gap={12} aria-label="Notifications">
            <svg width="22" height="24" viewBox="0 0 22 24" {...stroke} strokeWidth="1.800"><path d="M11 2Q4 2 4 9V13L2 18H20L18 13V9Q18 2 11 2ZM8 18.500Q8.500 22 11 22T14 18.500" /></svg>
          </TrayButton>
          <TrayButton $gap={26} aria-label="Copilot preview"><Copilot /></TrayButton>
        </Tray>
      </Taskbar>
    </Screen>
  );
}
